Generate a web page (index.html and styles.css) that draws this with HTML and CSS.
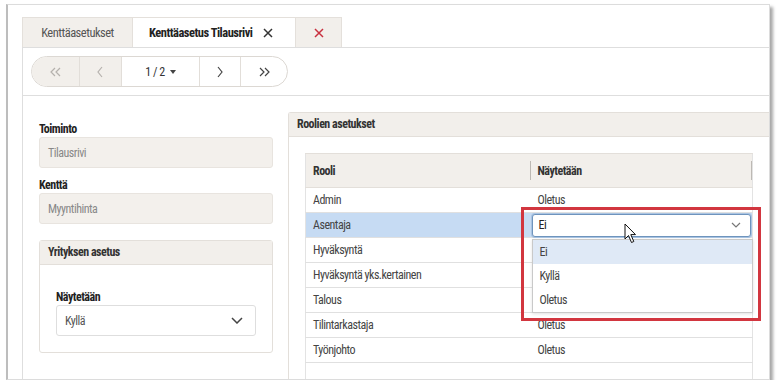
FILE: index.html
```html
<!DOCTYPE html>
<html>
<head>
	<title>Kenttäasetus Tilausrivi</title>
	<link rel="stylesheet" href="styles.css">
</head>
<body>
	<div class="window">
		<div class="tabs">
			<div class="tab">Kenttäasetukset</div>
			<div class="tab active">Kenttäasetus Tilausrivi
				<svg class="x" width="10" height="10" viewBox="0 0 10 10"><path d="M1 1L9 9M9 1L1 9"/></svg>
			</div>
			<div class="tab closeall">
				<svg class="x red" width="10" height="10" viewBox="0 0 10 10"><path d="M1 1L9 9M9 1L1 9"/></svg>
			</div>
		</div>

		<div class="content">
			<div class="toolbar">
				<div class="pager">
					<span class="pg w47 off"><svg width="13" height="10" viewBox="0 0 13 10"><path d="M6 1L2 5L6 9M11 1L7 5L11 9"/></svg></span>
					<span class="pg w43 off"><svg width="8" height="12" viewBox="0 0 8 12"><path d="M6 1L2 6L6 11"/></svg></span>
					<span class="pg w78">1 / 2 <svg class="caret" width="6" height="4" viewBox="0 0 6 4"><path d="M0 0H6L3 4Z"/></svg></span>
					<span class="pg w42"><svg width="8" height="12" viewBox="0 0 8 12"><path d="M2 1L6 6L2 11"/></svg></span>
					<span class="pg w47"><svg width="13" height="10" viewBox="0 0 13 10"><path d="M2 1L6 5L2 9M7 1L11 5L7 9"/></svg></span>
				</div>
			</div>

			<div class="main">
				<div class="left">
					<div class="label">Toiminto</div>
					<div class="field">Tilausrivi</div>
					<div class="label second">Kenttä</div>
					<div class="field">Myyntihinta</div>

					<div class="panel company">
						<div class="panel-head">Yrityksen asetus</div>
						<div class="company-body">
							<div class="label">Näytetään</div>
							<div class="select big">Kyllä
								<svg width="12" height="7" viewBox="0 0 12 7"><path d="M1 1L6 6L11 1"/></svg>
							</div>
						</div>
					</div>
				</div>

				<div class="panel roles">
					<div class="panel-head">Roolien asetukset</div>
					<div class="roles-body">
						<table class="grid">
							<thead>
								<tr><th class="c1">Rooli</th><th class="c2">Näytetään</th></tr>
							</thead>
							<tbody>
								<tr><td>Admin</td><td>Oletus</td></tr>
								<tr class="sel"><td>Asentaja</td>
									<td class="edit">
										<div class="select focus">Ei
											<svg width="10" height="6" viewBox="0 0 10 6"><path d="M1 1L5 5L9 1"/></svg>
										</div>
										<div class="dropdown">
											<div class="opt hover">Ei</div>
											<div class="opt">Kyllä</div>
											<div class="opt">Oletus</div>
										</div>
									</td>
								</tr>
								<!-- values of the next three rows are hidden under the open list -->
								<tr><td>Hyväksyntä</td><td></td></tr>
								<tr><td>Hyväksyntä yks.kertainen</td><td></td></tr>
								<tr><td>Talous</td><td></td></tr>
								<tr><td>Tilintarkastaja</td><td>Oletus</td></tr>
								<tr><td>Työnjohto</td><td>Oletus</td></tr>
								<tr class="empty"><td></td><td></td></tr>
							</tbody>
						</table>
					</div>
				</div>
			</div>
		</div>

		<div class="mark"></div>
		<svg class="cursor" width="13" height="21" viewBox="0 0 13 21"><path d="M1 1V16L4.5 12.5L7.5 19.5L9.8 18.5L6.8 11.6H11.5Z"/></svg>
	</div>
</body>
</html>
```

FILE: styles.css
```css
* {
	box-sizing: border-box;
}
body {
	margin: 0;
	background: #fff;
	font-family: "Roboto Condensed", Roboto, "Noto Sans", sans-serif;
	font-size: 12px;
	letter-spacing: -0.5px;
	color: #333;
}
.window {
	position: relative;
	margin: 4px 0 0 6px;
	width: 764px;
	height: 376px;
	padding: 12px 0 0 14px;
	border: 1px solid #dcdcdc;
	border-left: 2px solid #bdbdbd;
	box-shadow: 3px 3px 3px rgba(0, 0, 0, 0.35);
	overflow: hidden;
}

/* tabs */
.tabs {
	display: flex;
	height: 30px;
}
.tab {
	display: flex;
	align-items: center;
	justify-content: center;
	width: 111px;
	background: #f2efeb;
	border: 1px solid #e4e0db;
	border-bottom: none;
	color: #555;
	font-size: 12.5px;
}
.tab.active {
	width: 162px;
	justify-content: flex-start;
	padding-left: 16px;
	background: #fff;
	border-left: none;
	border-right: none;
	font-weight: 700;
	color: #222;
}
.tab.active .x {
	margin-left: 10px;
}
.tab.closeall {
	width: 47px;
}
.x path {
	stroke: #333;
	stroke-width: 1.5;
	fill: none;
}
.x.red path {
	stroke: #c8303f;
}

/* content */
.content {
	border-top: 1px solid #dedede;
	border-left: 1px solid #dedede;
}
.toolbar {
	padding: 8px 8px;
	border-bottom: 1px solid #dedede;
}
.pager {
	display: flex;
	width: 257px;
	height: 31px;
	border: 1px solid #dcd8d3;
	border-radius: 16px;
	overflow: hidden;
}
.pg {
	display: flex;
	align-items: center;
	justify-content: center;
	border-left: 1px solid #e2ded9;
	color: #333;
}
.pg:first-child {
	border-left: none;
}
.pg.off {
	background: #f2efeb;
}
.pg svg path {
	fill: none;
	stroke: #444;
	stroke-width: 1.2;
}
.pg.off svg path {
	stroke: #b5b1ad;
}
.pg .caret {
	margin-left: 5px;
}
.pg .caret path {
	fill: #444;
	stroke: none;
}
.w47 { width: 47px; }
.w43 { width: 43px; }
.w78 { width: 78px; }
.w42 { width: 42px; }

.main {
	display: flex;
	gap: 15px;
	padding: 16px 0 0 16px;
}
.left {
	flex: none;
	width: 234px;
	margin-top: 9px;
}
.label {
	font-weight: 700;
	line-height: 16px;
	color: #222;
}
.label.second {
	margin-top: 9px;
}
.field {
	display: flex;
	align-items: center;
	height: 31px;
	padding-left: 8px;
	background: #f3f0ec;
	border: 1px solid #e8e4df;
	border-radius: 3px;
	color: #888;
}

.panel {
	border: 1px solid #e3dfda;
	border-radius: 3px;
}
.panel-head {
	height: 24px;
	line-height: 23px;
	padding-left: 8px;
	background: #f2efeb;
	border-bottom: 1px solid #e3dfda;
	font-weight: 700;
	color: #333;
}
.company {
	margin-top: 16px;
}
.company-body {
	padding: 24px 16px 16px 16px;
}

.select {
	display: flex;
	align-items: center;
	justify-content: space-between;
	background: #fff;
	border: 1px solid #dedede;
	border-radius: 3px;
	color: #333;
}
.select.big {
	height: 31px;
	padding: 0 12px 0 8px;
	color: #555;
}
.select svg path {
	fill: none;
	stroke: #444;
	stroke-width: 1.5;
}

.roles {
	flex: 1;
	border-right: none;
	border-bottom: none;
	border-radius: 3px 0 0 0;
}
.roles-body {
	padding: 16px 16px 0 16px;
}
.grid {
	width: 448px;
	border-collapse: collapse;
	border-left: 1px solid #e3e3e3;
	border-right: 1px solid #e3e3e3;
}
.grid th {
	position: relative;
	height: 34px;
	padding: 0 7px;
	background: #f2efeb;
	border-top: 1px solid #e3dfda;
	border-bottom: 1px solid #e3dfda;
	text-align: left;
	font-weight: 700;
	color: #333;
}
.grid th.c1 {
	width: 225px;
}
.grid th::after {
	content: "";
	position: absolute;
	right: 0;
	top: 7px;
	height: 19px;
	border-right: 1px solid #bdb9b4;
}
.grid td {
	height: 25px;
	padding: 0 7px;
	border-bottom: 1px solid #e0e0e0;
	color: #444;
}
.grid tr.sel td {
	background: #c6dbf3;
}
.grid tr.empty td {
	height: 30px;
	border-bottom: none;
}
.grid td.edit {
	position: relative;
	padding: 0 1px;
}
.select.focus {
	height: 23px;
	padding: 0 9px 0 6px;
	border: 1px solid #6f94bd;
	box-shadow: 0 0 0 1px #a9c4e2;
	color: #222;
}
.select.focus svg path {
	stroke: #777;
	stroke-width: 1.2;
}
.dropdown {
	position: absolute;
	top: 26px;
	left: 1px;
	width: 221px;
	background: #fff;
	border: 1px solid #c9c9c9;
	box-shadow: 0 1px 3px rgba(0, 0, 0, 0.12);
	z-index: 2;
}
.opt {
	height: 24px;
	line-height: 24px;
	padding-left: 7px;
	color: #444;
}
.opt.hover {
	background: #dfe9f6;
}

/* annotation + pointer */
.mark {
	position: absolute;
	left: 513px;
	top: 202px;
	width: 240px;
	height: 114px;
	border: 3px solid #d2363f;
	z-index: 3;
}
.cursor {
	position: absolute;
	left: 616px;
	top: 218px;
	z-index: 4;
}
.cursor path {
	fill: #fff;
	stroke: #111;
	stroke-width: 1;
	stroke-linejoin: round;
}
```
